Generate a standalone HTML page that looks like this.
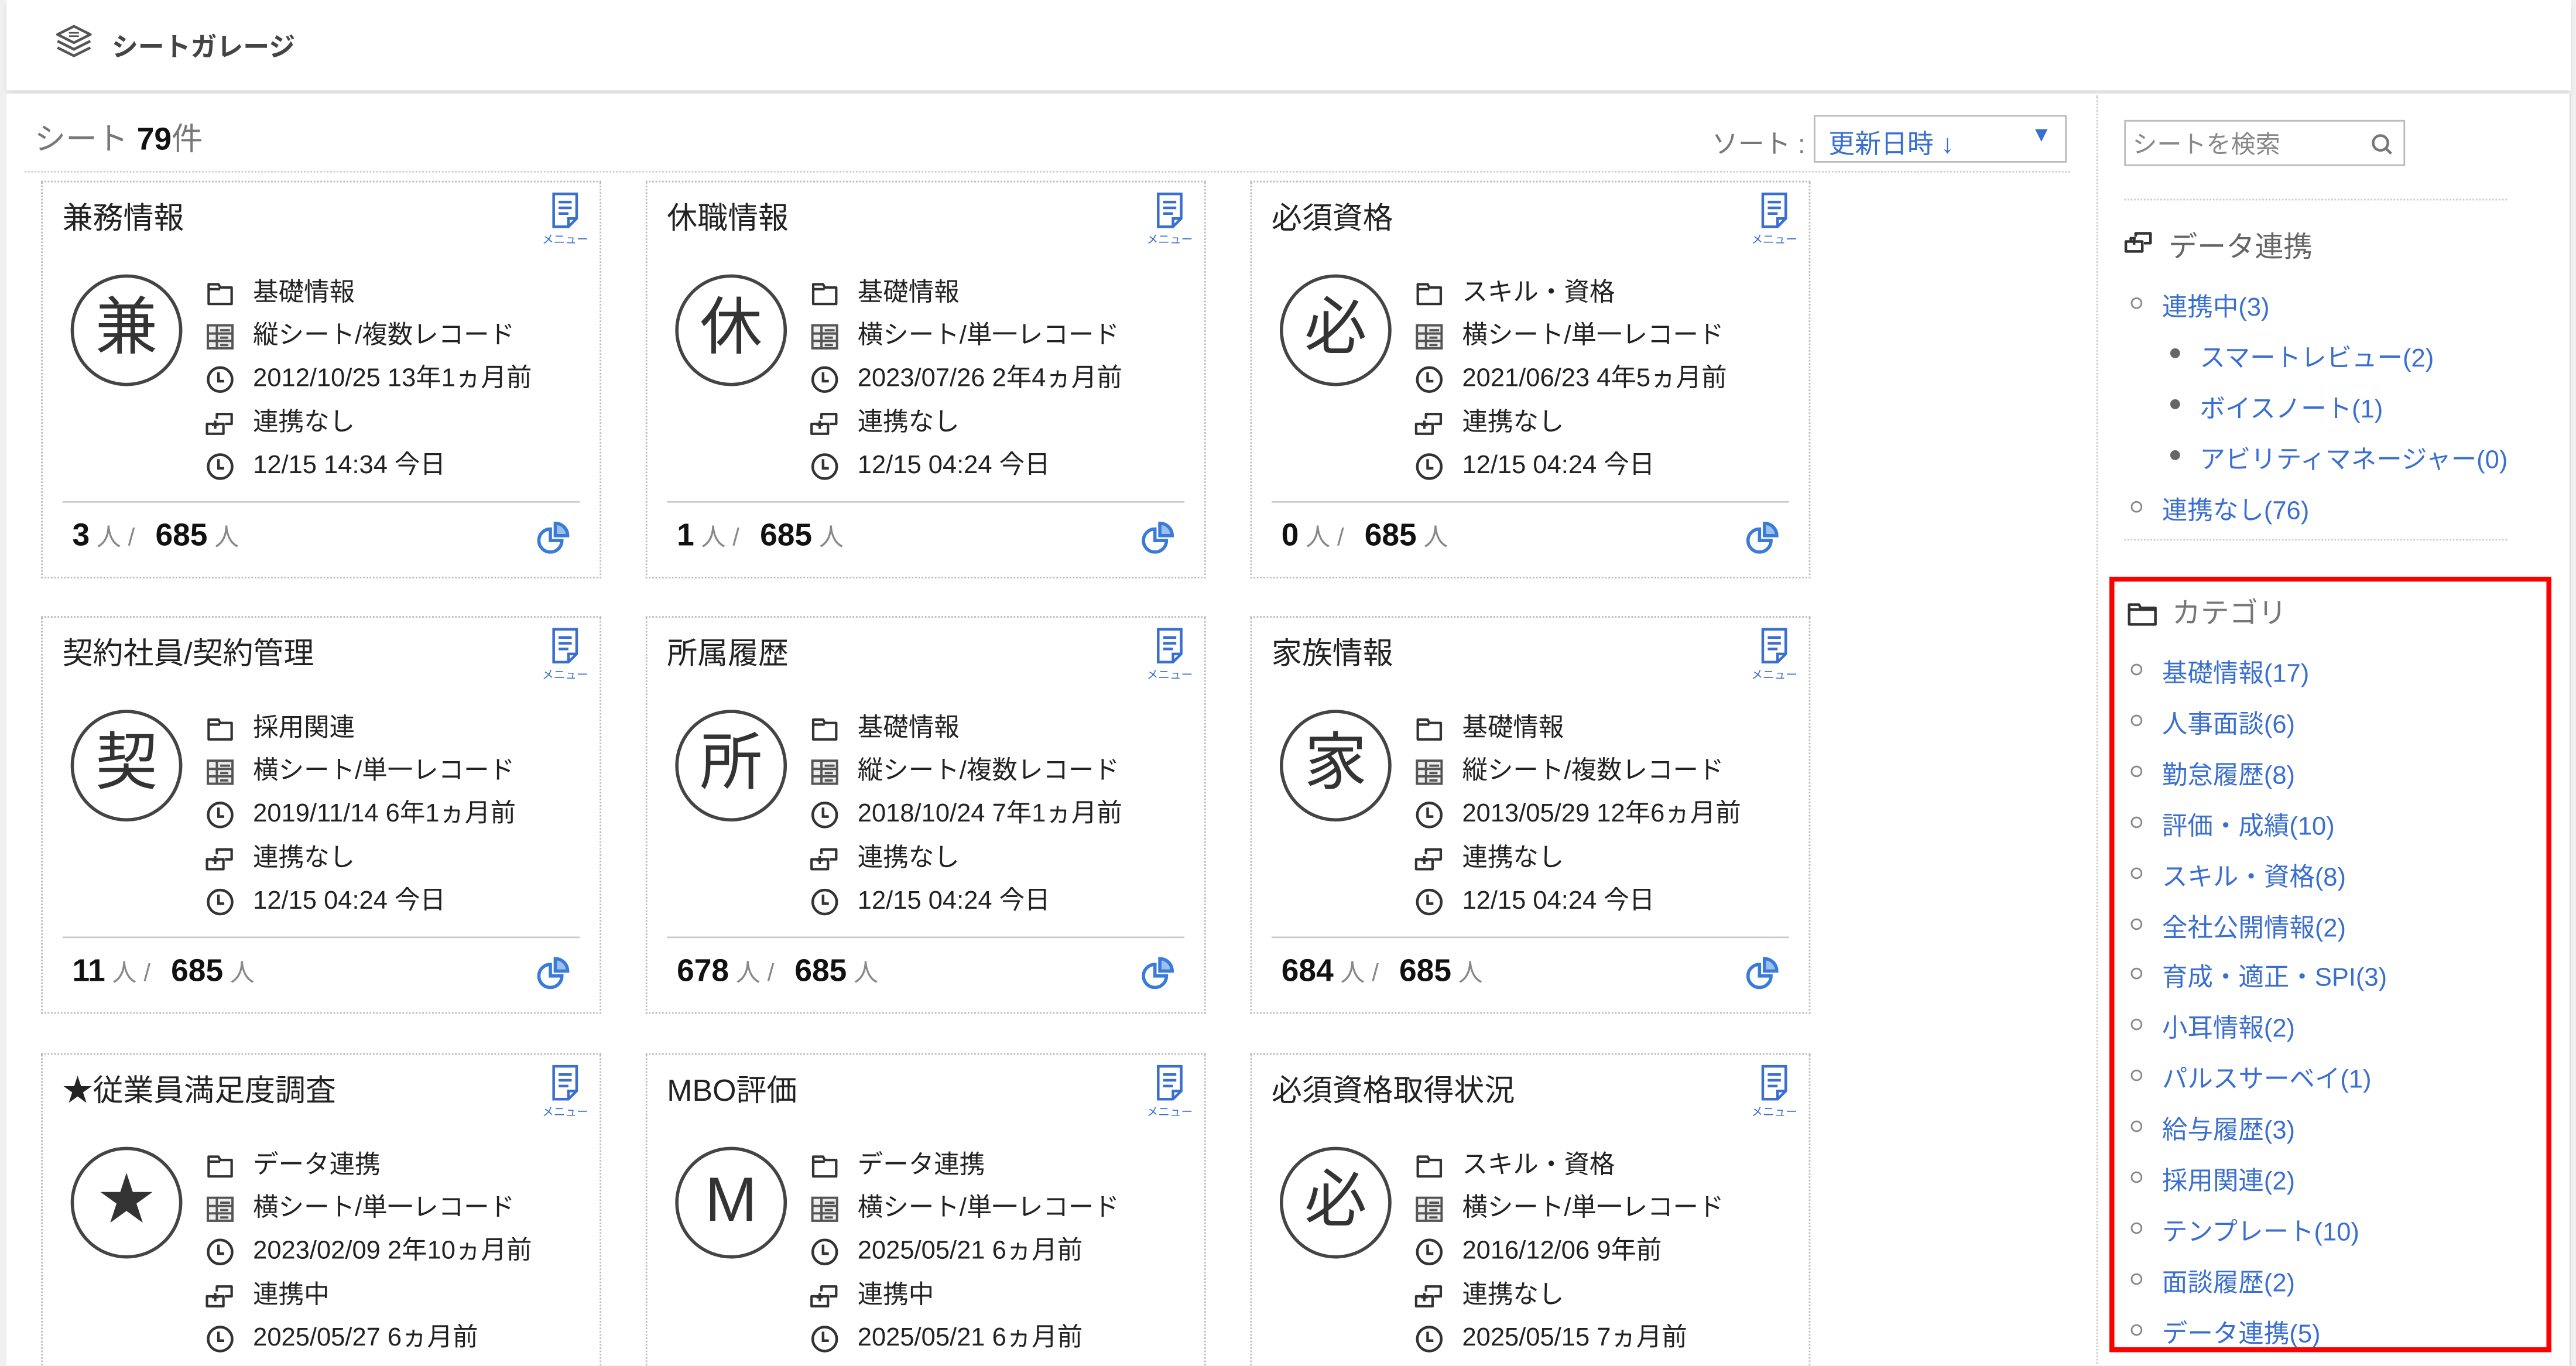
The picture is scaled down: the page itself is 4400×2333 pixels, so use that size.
<!DOCTYPE html>
<html><head><meta charset="utf-8"><style>
*{margin:0;padding:0;box-sizing:border-box}
html,body{width:4400px;height:2333px;overflow:hidden;background:#f0f0f0}
#s{position:absolute;left:0;top:0;width:1568px;height:831px;overflow:hidden;transform:scale(2.80612);transform-origin:0 0;font-family:"Liberation Sans","Noto Sans CJK JP",sans-serif;color:#222;background:#f0f0f0}
.a{position:absolute;white-space:nowrap}
#hdr{position:absolute;left:4px;top:0;width:1561px;height:55px;background:#fff;box-shadow:0 2px 3px rgba(0,0,0,.08)}
#main{position:absolute;left:4px;top:57px;width:1561px;height:800px;background:#fff;border-right:1px solid #ddd}
.card{position:absolute;width:341px;height:242px;border:1px dotted #bbb;background:#fff}
.t{position:absolute;left:12px;top:8px;font-size:18.5px;color:#222;white-space:nowrap}
.menu{position:absolute;left:302px;top:5px;width:32px;text-align:center;font-size:7px;color:#3a6fd0;line-height:8px}
.circ{position:absolute;left:17px;top:56px;width:68px;height:68px;border:2px solid #444;border-radius:50%;text-align:center;line-height:62px;font-size:38px;color:#333}
.row{position:absolute;left:99px;font-size:15.5px;color:#222;line-height:18px;white-space:nowrap;width:230px;height:18px}
.row svg{position:absolute;left:0;top:0}
.row span{position:absolute;left:29px;top:0;white-space:nowrap}
.sep{position:absolute;left:12px;right:12px;top:194px;border-top:1px solid #ccc}
.ft{position:absolute;left:18px;top:205px;font-size:15px;color:#888;white-space:nowrap}
.ft b{font-size:19px;color:#111}
.pie{position:absolute;left:301px;top:206px}
.li{position:absolute;font-size:15.5px;color:#3a6fd0;white-space:nowrap}
.bo{position:absolute;width:7px;height:7px;border:1.5px solid #888;border-radius:50%}
.bd{position:absolute;width:6px;height:6px;background:#666;border-radius:50%}
</style></head><body><div id="s">
<div id="hdr">
<svg class="a" style="left:28px;top:13px" width="26" height="26" viewBox="0 0 26 26" fill="none" stroke="#555" stroke-width="1.6" stroke-linejoin="round"><path d="M13 3 L23 8 L13 13 L3 8 Z"/><path d="M3 12 L13 17 L23 12"/><path d="M3 16 L13 21 L23 16"/><path d="M10 7h6M10 9h6" stroke-width="1"/></svg>
<div class="a" style="left:64px;top:15px;font-size:16px;font-weight:bold;color:#444">シートガレージ</div>
</div>
<div id="main"></div>
<div class="a" style="left:21px;top:70px;font-size:19px;color:#777">シート <b style="color:#111">79</b>件</div>
<div class="a" style="left:1042px;top:74px;font-size:16px;color:#777">ソート :</div>
<div class="a" style="left:1104px;top:70px;width:154px;height:29px;border:1px solid #bbb;font-size:16px;color:#3a6fd0;padding:3px 8px">更新日時 ↓<span style="position:absolute;right:8px;top:3px;font-size:13px">▼</span></div>
<div class="a" style="left:15px;top:104px;width:1245px;border-top:1px dotted #ccc"></div>
<div class="a" style="left:1276px;top:58px;height:780px;border-left:1px dotted #ccc"></div>

<div id="cards"></div>

<div class="a" style="left:1293px;top:73px;width:171px;height:28px;border:1px solid #bbb;font-size:15px;color:#888;padding:3px 4px">シートを検索
<svg style="position:absolute;right:6px;top:7px" width="14" height="14" viewBox="0 0 14 14" fill="none" stroke="#777" stroke-width="1.6"><circle cx="6" cy="6" r="4.5"/><path d="M9.5 9.5l3 3"/></svg></div>
<div class="a" style="left:1293px;top:121px;width:233px;border-top:1px dotted #ccc"></div>
<svg class="a" style="left:1293px;top:140px" width="18" height="16" viewBox="0 0 18 16" fill="none" stroke="#333" stroke-width="1.6" stroke-linejoin="round"><path d="M7 4 V2 h9 v6 h-4"/><path d="M1 7 h10 v6 H1 Z"/><path d="M4 7V5h3M6 5v4M4 7"/></svg>
<div class="a" style="left:1320px;top:137px;font-size:17.5px;color:#666">データ連携</div>
<div class="bo" style="left:1297px;top:181px"></div><div class="li" style="left:1316px;top:175px">連携中(3)</div>
<div class="bd" style="left:1321px;top:212px"></div><div class="li" style="left:1339px;top:206px">スマートレビュー(2)</div>
<div class="bd" style="left:1321px;top:243px"></div><div class="li" style="left:1339px;top:237px">ボイスノート(1)</div>
<div class="bd" style="left:1321px;top:274px"></div><div class="li" style="left:1339px;top:268px">アビリティマネージャー(0)</div>
<div class="bo" style="left:1297px;top:305px"></div><div class="li" style="left:1316px;top:299px">連携なし(76)</div>
<div class="a" style="left:1293px;top:328px;width:233px;border-top:1px dotted #ccc"></div>
<div class="a" style="left:1284px;top:351px;width:269px;height:472px;border:3px solid #f00"></div>
<svg class="a" style="left:1295px;top:366px" width="18" height="16" viewBox="0 0 18 16" fill="none" stroke="#333" stroke-width="1.6" stroke-linejoin="round"><path d="M1 2h6l1 2h9v10H1Z M1 5h16"/></svg>
<div class="a" style="left:1322px;top:360px;font-size:17.5px;color:#777">カテゴリ</div>
<div id="cats"></div>
</div>
<script>
var svgs={
fold:'<svg width="18" height="18" viewBox="0 0 18 18" fill="none" stroke="#333" stroke-width="1.5" stroke-linejoin="round"><path d="M2 3h6l1 2h7v10H2Z M2 6h7"/></svg>',
grid:'<svg width="18" height="18" viewBox="0 0 18 18" fill="none" stroke="#555" stroke-width="1.4"><rect x="1.5" y="2" width="15" height="14" fill="#eee"/><path d="M7 2v14M1.5 7h15M1.5 11.5h15M9 5h6M9 9.5h5M9 14h5"/></svg>',
clock:'<svg width="18" height="18" viewBox="0 0 18 18" fill="none" stroke="#333" stroke-width="1.6"><circle cx="9" cy="9" r="7.3"/><path d="M8 4.5V10h3.5"/></svg>',
link:'<svg width="18" height="18" viewBox="0 0 18 18" fill="none" stroke="#333" stroke-width="1.5" stroke-linejoin="round"><path d="M7 6V3h9v6h-4"/><path d="M1 9h10v6H1Z"/><path d="M6 7v5M4 9.5h4" /></svg>'};
var cards=[
["兼務情報","兼","基礎情報","縦シート/複数レコード","2012/10/25 13年1ヵ月前","連携なし","12/15 14:34 今日","3"],
["休職情報","休","基礎情報","横シート/単一レコード","2023/07/26 2年4ヵ月前","連携なし","12/15 04:24 今日","1"],
["必須資格","必","スキル・資格","横シート/単一レコード","2021/06/23 4年5ヵ月前","連携なし","12/15 04:24 今日","0"],
["契約社員/契約管理","契","採用関連","横シート/単一レコード","2019/11/14 6年1ヵ月前","連携なし","12/15 04:24 今日","11"],
["所属履歴","所","基礎情報","縦シート/複数レコード","2018/10/24 7年1ヵ月前","連携なし","12/15 04:24 今日","678"],
["家族情報","家","基礎情報","縦シート/複数レコード","2013/05/29 12年6ヵ月前","連携なし","12/15 04:24 今日","684"],
["★従業員満足度調査","★","データ連携","横シート/単一レコード","2023/02/09 2年10ヵ月前","連携中","2025/05/27 6ヵ月前","0"],
["MBO評価","M","データ連携","横シート/単一レコード","2025/05/21 6ヵ月前","連携中","2025/05/21 6ヵ月前","0"],
["必須資格取得状況","必","スキル・資格","横シート/単一レコード","2016/12/06 9年前","連携なし","2025/05/15 7ヵ月前","0"]];
var xs=[25,393,761],ys=[110,375,641],h='';
cards.forEach(function(c,i){
var x=xs[i%3],y=ys[Math.floor(i/3)];
h+='<div class="card" style="left:'+x+'px;top:'+y+'px"><div class="t">'+c[0]+'</div>';
h+='<div class="menu"><svg width="20" height="24" viewBox="0 0 20 24" fill="none" stroke="#3a6fd0" stroke-width="1.6"><path d="M3 2h14v15l-5 5H3Z M12 22v-5h5 M6 7h8M6 10.5h8M6 14h6"/></svg><br>メニュー</div>';
h+='<div class="circ"'+(c[1]=="★"?' style="font-size:34px"':'')+'>'+c[1]+'</div>';
var ic=['fold','grid','clock','link','clock'],ty=[59,85,111,138,164];
for(var k=0;k<5;k++)h+='<div class="row" style="top:'+ty[k]+'px">'+svgs[ic[k]]+'<span>'+c[2+k]+'</span></div>';
h+='<div class="sep"></div><div class="ft"><b>'+c[7]+'</b> 人 / &nbsp;&nbsp;<b>685</b> 人</div>';
h+='<svg class="pie" width="20" height="20" viewBox="0 0 20 20" fill="none" stroke="#3a7ad8" stroke-width="2"><path d="M8 5a7 7 0 1 0 7 7H8Z"/><path d="M11 1.5a7.5 7.5 0 0 1 7.5 7.5H11Z" fill="#9cc0ee"/></svg></div>';
});
document.getElementById('cards').innerHTML=h;
var cats=["基礎情報(17)","人事面談(6)","勤怠履歴(8)","評価・成績(10)","スキル・資格(8)","全社公開情報(2)","育成・適正・SPI(3)","小耳情報(2)","パルスサーベイ(1)","給与履歴(3)","採用関連(2)","テンプレート(10)","面談履歴(2)","データ連携(5)"];
var g='';cats.forEach(function(t,i){var y=398+i*30.9;g+='<div class="bo" style="left:1297px;top:'+(y+6)+'px"></div><div class="li" style="left:1316px;top:'+y+'px">'+t+'</div>';});
document.getElementById('cats').innerHTML=g;
</script>
</body></html>
